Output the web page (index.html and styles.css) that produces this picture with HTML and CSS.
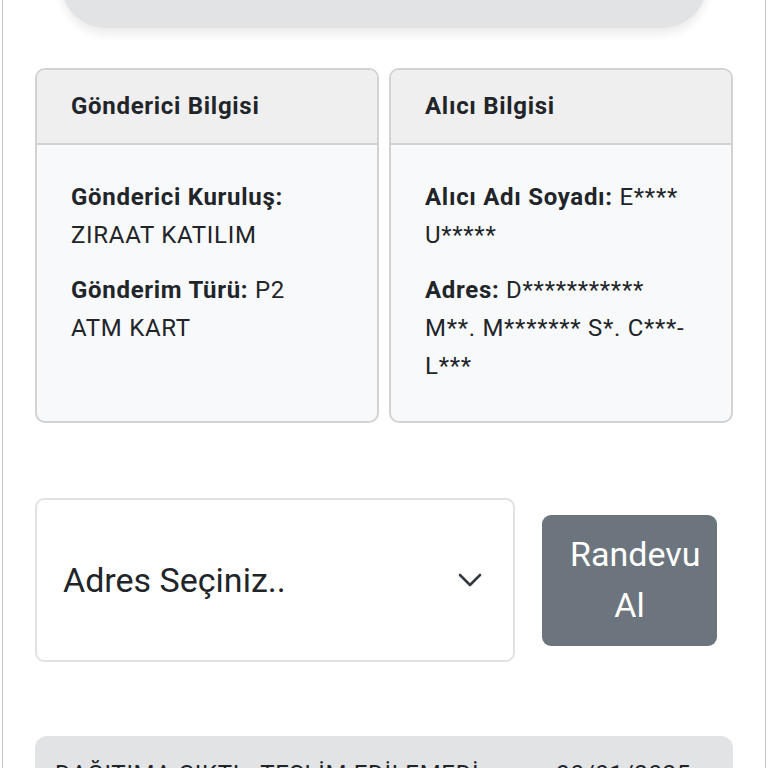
FILE: index.html
```html
<!DOCTYPE html>
<html lang="tr">
<head>
  <meta charset="UTF-8" />
  <meta name="viewport" content="width=device-width, initial-scale=1.0" />
  <title>Gönderi Takip</title>
  <link rel="stylesheet" href="styles.css">
</head>
<body>
  <div class="page">
    <!-- status pill from the section above, scrolled off -->
    <div class="status-pill"></div>

    <div class="info-cards">
      <div class="info-card">
        <div class="card-header">Gönderici Bilgisi</div>
        <div class="card-body">
          <p><b>Gönderici Kuruluş:</b> ZIRAAT KATILIM</p>
          <p><b>Gönderim Türü:</b> P2 ATM KART</p>
        </div>
      </div>
      <div class="info-card">
        <div class="card-header">Alıcı Bilgisi</div>
        <div class="card-body">
          <p><b>Alıcı Adı Soyadı:</b> E**** U*****</p>
          <p><b>Adres:</b> D*********** M**. M******* S*. C***-L***</p>
        </div>
      </div>
    </div>

    <div class="appointment">
      <div class="address-select">
        <span>Adres Seçiniz..</span>
        <svg class="chevron" width="24" height="16" viewBox="0 0 24 16">
          <path d="M2 3 L12 13 L22 3" fill="none" stroke="#343a40" stroke-width="2.6" stroke-linecap="round" stroke-linejoin="round"/>
        </svg>
      </div>
      <button class="appointment-button">Randevu Al</button>
    </div>

    <div class="history-item">
      <span>DAĞITIMA ÇIKTI - TESLİM EDİLEMEDİ</span>
      <span>30/01/2025</span>
    </div>
  </div>
</body>
</html>
```

FILE: styles.css
```css
body {
  margin: 0;
  font-family: Roboto, "Liberation Sans", Arial, sans-serif;
  color: #212529;
  background-color: #fff;
}
.page {
  margin: 0 2px;
  padding: 0 32px;
  border-left: 1px solid #c4c4c4;
  border-right: 1px solid #c4c4c4;
  height: 768px;
  overflow: hidden;
}
.status-pill {
  height: 90px;
  margin: -62px 26px 0;
  background-color: #e2e3e5;
  border-radius: 45px;
  box-shadow: 0 6px 10px rgba(0, 0, 0, 0.08);
}
.info-cards {
  display: flex;
  gap: 10px;
  margin-top: 40px;
}
.info-card {
  flex: 1;
  border: 2px solid #d2d2d2;
  border-radius: 10px;
  background-color: #f8f9fa;
  overflow: hidden;
}
.card-header {
  height: 73px;
  line-height: 73px;
  padding: 0 34px;
  background-color: #efefef;
  border-bottom: 2px solid #d2d2d2;
  font-size: 24px;
  letter-spacing: 0.7px;
  font-weight: bold;
}
.card-body {
  padding: 33px 34px 19px;
  font-size: 24px;
  letter-spacing: 0.7px;
  line-height: 38px;
}
.card-body p {
  margin: 0 0 17px;
}
.appointment {
  display: flex;
  align-items: center;
  gap: 27px;
  margin-top: 75px;
}
.address-select {
  flex: none;
  width: 480px;
  height: 164px;
  box-sizing: border-box;
  display: flex;
  align-items: center;
  justify-content: space-between;
  padding: 0 31px 0 26px;
  background-color: #fff;
  border: 2px solid #e2e2e2;
  border-radius: 9px;
  font-size: 34px;
}
.appointment-button {
  flex: none;
  width: 175px;
  height: 131px;
  padding: 0 28px;
  background-color: #6c757d;
  color: #fff;
  border: none;
  border-radius: 9px;
  font-family: inherit;
  font-size: 34px;
  line-height: 51px;
}
.history-item {
  display: flex;
  justify-content: space-between;
  margin-top: 74px;
  padding: 22px 42px 20px 20px;
  background-color: #e2e3e5;
  border-radius: 12px;
  font-size: 24px;
  letter-spacing: 0.7px;
  line-height: 32px;
}
```
